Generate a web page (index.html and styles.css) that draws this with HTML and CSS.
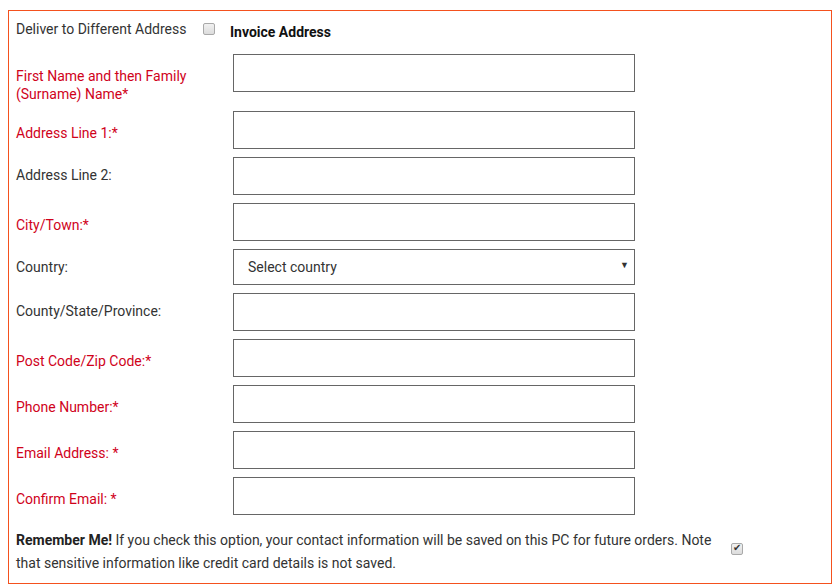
FILE: index.html
```html
<!DOCTYPE html>
<html lang="en">
<head>
    <meta charset="UTF-8">
    <title>Delivery Address</title>
    <link rel="stylesheet" href="styles.css">
</head>
<body>
    <form id="addressForm">
        <div class="form-head">
            <span class="head-label">Deliver to Different Address</span>
            <input type="checkbox" class="check" id="diffAddress">
            <span class="head-title">Invoice Address</span>
        </div>

        <div class="row">
            <label class="req" for="fullName">First Name and then Family<br>(Surname) Name*</label>
            <input type="text" id="fullName">
        </div>
        <div class="row">
            <label class="req" for="addr1">Address Line 1:*</label>
            <input type="text" id="addr1">
        </div>
        <div class="row">
            <label for="addr2">Address Line 2:</label>
            <input type="text" id="addr2">
        </div>
        <div class="row">
            <label class="req" for="city">City/Town:*</label>
            <input type="text" id="city">
        </div>
        <div class="row">
            <label for="country">Country:</label>
            <div class="select-wrap">
                <select id="country">
                    <option>Select country</option>
                </select>
            </div>
        </div>
        <div class="row">
            <label for="county">County/State/Province:</label>
            <input type="text" id="county">
        </div>
        <div class="row">
            <label class="req" for="postcode">Post Code/Zip Code:*</label>
            <input type="text" id="postcode">
        </div>
        <div class="row">
            <label class="req" for="phone">Phone Number:*</label>
            <input type="text" id="phone">
        </div>
        <div class="row">
            <label class="req" for="email">Email Address: *</label>
            <input type="text" id="email">
        </div>
        <div class="row">
            <label class="req" for="email2">Confirm Email: *</label>
            <input type="text" id="email2">
        </div>

        <!-- Remember me -->
        <div class="remember">
            <p><b>Remember Me!</b> If you check this option, your contact information will be saved on this PC for future orders. Note that sensitive information like credit card details is not saved.</p>
            <input type="checkbox" class="check" id="rememberMe" checked>
        </div>
    </form>
</body>
</html>
```

FILE: styles.css
```css
html, body {
    margin: 0;
    padding: 0;
    background: #fff;
    font-family: Roboto, sans-serif;
    font-size: 14px;
    color: #333;
}
#addressForm {
    box-sizing: border-box;
    width: 824px;
    height: 574px;
    margin: 10px 0 0 8px;
    padding: 0 0 0 6px;
    border: 1px solid #f4511e;
}
.form-head {
    display: flex;
    align-items: flex-start;
    height: 43px;
    padding-top: 9px;
    box-sizing: border-box;
    line-height: 18px;
}
.head-label {
    width: 187px;
    padding-left: 1px;
}
.head-title {
    margin-left: 15px;
    padding-top: 3px;
    font-weight: bold;
    color: #111;
}
.check {
    appearance: none;
    box-sizing: border-box;
    width: 12px;
    height: 12px;
    margin: 3px 0 0 0;
    border: 1px solid #a9a9a9;
    border-radius: 2px;
    background: linear-gradient(#f1f1f1, #dcdcdc);
    position: relative;
}
.check:checked::after {
    content: "\2714";
    position: absolute;
    left: 1px;
    top: -2px;
    font-size: 10px;
    color: #333;
}
.row {
    display: flex;
    align-items: flex-start;
    margin-bottom: 8px;
}
.row label {
    width: 217px;
    padding: 9px 0 0 1px;
    line-height: 18px;
    color: #333;
}
.row label.req {
    padding-top: 13px;
    color: #d0021b;
}
.row input {
    box-sizing: border-box;
    width: 402px;
    height: 38px;
    margin: 0;
    border: 1px solid #666;
    font: inherit;
}
.select-wrap {
    position: relative;
    width: 402px;
}
.select-wrap::after {
    content: "\25BC";
    position: absolute;
    right: 6px;
    top: 11px;
    font-size: 9px;
    color: #333;
    pointer-events: none;
}
.select-wrap select {
    appearance: none;
    box-sizing: border-box;
    width: 402px;
    height: 36px;
    margin: 0;
    padding: 0 0 0 14px;
    border: 1px solid #666;
    border-radius: 0;
    background: #fff;
    font: inherit;
    color: #333;
}
.remember {
    display: flex;
    align-items: flex-start;
    margin-top: 14px;
}
.remember p {
    width: 702px;
    margin: 0;
    padding-left: 1px;
    line-height: 23px;
}
.remember b {
    color: #222;
}
.remember .check {
    margin: 14px 0 0 13px;
}
```
